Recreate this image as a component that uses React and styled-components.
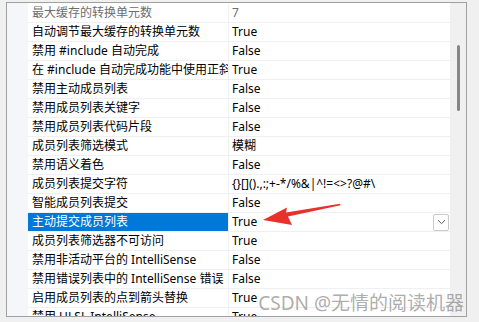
import React from "react";
import styled, { createGlobalStyle } from "styled-components";

const GlobalStyle = createGlobalStyle`
  html, body { margin: 0; padding: 0; background: #f0f0f0; }
  body {
    font-family: "Noto Sans", "Noto Sans CJK SC", sans-serif;
    font-size: 12px;
    color: #000;
  }
`;

const Screen = styled.div`
  position: relative;
  width: 479px;
  height: 322px;
  box-sizing: border-box;
  padding: 2px 0 0 6px;
  background: #f0f0f0;
  overflow: hidden;
`;

const Frame = styled.div`
  width: 461px;
  height: 315px;
  box-sizing: border-box;
  border: 1px solid #a0a0a0;
  background: #fff;
  display: flex;
  overflow: hidden;
`;

const Gutter = styled.div`
  width: 21px;
  flex: none;
  background: #f4f6fa;
`;

const Table = styled.div`
  flex: 1;
  min-width: 0;
  padding-top: 1px;
  display: flex;
  flex-direction: column;
  overflow: hidden;
`;

const Row = styled.div`
  flex: none;
  display: grid;
  grid-template-columns: 200px 1fr;
  height: 19px;
  box-sizing: border-box;
  border-bottom: 1px solid #eef0f4;
`;

const NameCell = styled.div`
  padding-left: 4px;
  line-height: 18px;
  white-space: nowrap;
  overflow: hidden;
  background: ${(p) => (p.$selected ? "#0078d7" : "transparent")};
  color: ${(p) => (p.$selected ? "#fff" : p.$disabled ? "#6d6d6d" : "#000")};
`;

const ValueCell = styled.div`
  display: flex;
  align-items: center;
  border-left: 1px solid #eef0f4;
  padding-left: 3px;
  padding-right: 1px;
  line-height: 18px;
  white-space: nowrap;
  overflow: hidden;
  color: ${(p) => (p.$disabled ? "#6d6d6d" : "#000")};
`;

const ValueText = styled.span`
  flex: 1;
  overflow: hidden;
`;

const DropButton = styled.div`
  flex: none;
  width: 16px;
  height: 17px;
  box-sizing: border-box;
  border: 1px solid #c9c9c9;
  border-radius: 2px;
  background: #fff;
  display: flex;
  align-items: center;
  justify-content: center;
`;

const Scrollbar = styled.div`
  width: 16px;
  flex: none;
  background: #f0f0f0;
  display: flex;
  justify-content: center;
  padding-top: 42px;
  box-sizing: border-box;
`;

const Thumb = styled.div`
  width: 3px;
  height: 66px;
  border-radius: 1.5px;
  background: #868686;
`;

const Overlay = styled.svg`
  position: absolute;
  left: 0;
  top: 0;
  pointer-events: none;
`;

const Watermark = styled.div`
  position: absolute;
  right: 15px;
  bottom: 8px;
  font-family: "Noto Sans", "Noto Sans CJK SC", sans-serif;
  font-size: 19px;
  line-height: 22px;
  color: rgba(120, 120, 120, 0.62);
  white-space: nowrap;
  pointer-events: none;
`;

const rows = [
  { name: "最大缓存的转换单元数", value: "7", disabled: true },
  { name: "自动调节最大缓存的转换单元数", value: "True" },
  { name: "禁用 #include 自动完成", value: "False" },
  { name: "在 #include 自动完成功能中使用正斜杠", value: "True" },
  { name: "禁用主动成员列表", value: "False" },
  { name: "禁用成员列表关键字", value: "False" },
  { name: "禁用成员列表代码片段", value: "False" },
  { name: "成员列表筛选模式", value: "模糊" },
  { name: "禁用语义着色", value: "False" },
  { name: "成员列表提交字符", value: "{}[]().,:;+-*/%&|^!=<>?@#\\" },
  { name: "智能成员列表提交", value: "False" },
  { name: "主动提交成员列表", value: "True", selected: true },
  { name: "成员列表筛选器不可访问", value: "True" },
  { name: "禁用非活动平台的 IntelliSense", value: "False" },
  { name: "禁用错误列表中的 IntelliSense 错误", value: "False" },
  { name: "启用成员列表的点到箭头替换", value: "True" },
  { name: "禁用 HLSL IntelliSense", value: "True" },
];

export default function App() {
  return (
    <>
      <GlobalStyle />
      <Screen>
        <Frame>
          <Gutter />
          <Table>
            {rows.map((r, i) => (
              <Row key={i}>
                <NameCell $selected={r.selected} $disabled={r.disabled}>
                  {r.name}
                </NameCell>
                <ValueCell $disabled={r.disabled}>
                  <ValueText>{r.value}</ValueText>
                  {r.selected && (
                    <DropButton>
                      <svg width="9" height="6" viewBox="0 0 9 6">
                        <path d="M1 1.2 L4.5 4.6 L8 1.2" fill="none" stroke="#5a5a5a" strokeWidth="1" />
                      </svg>
                    </DropButton>
                  )}
                </ValueCell>
              </Row>
            ))}
          </Table>
          <Scrollbar>
            <Thumb />
          </Scrollbar>
        </Frame>
        <Overlay width="479" height="322" viewBox="0 0 479 322">
          <polygon
            points="263,220 287,207.5 286,212.5 340,203.8 340.5,205.2 288,216.5 292,225"
            fill="#e8312b"
          />
        </Overlay>
        <Watermark>CSDN @无情的阅读机器</Watermark>
      </Screen>
    </>
  );
}
